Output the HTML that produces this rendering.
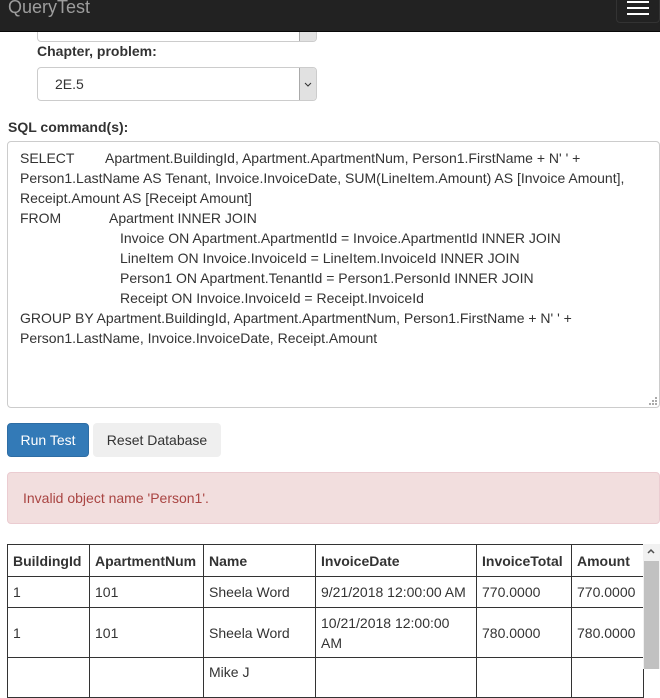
<!DOCTYPE html>
<html><head><style>
*{box-sizing:border-box;margin:0;padding:0}
body{width:660px;height:669px;overflow:hidden;background:#fff;font-family:"Liberation Sans",Arial,sans-serif;font-size:14px;color:#333;position:relative}
.abs{position:absolute}
.nav{left:0;top:0;width:660px;height:32px;background:#222;border-bottom:1px solid #080808;z-index:5}
.brand{left:8px;top:-4px;font-size:18px;color:#9d9d9d;line-height:22px}
.tog{left:616px;top:-10px;width:44px;height:33px;border:1px solid #333;border-radius:4px}
.bar{position:absolute;left:10px;width:22px;height:2px;background:#fff}
.sel{border:1px solid #ccc;border-radius:4px;background:#fff}
.arr{position:absolute;right:0;top:0;bottom:0;width:17px;background:#e1e1e1;border-left:1px solid #aaa;border-radius:0 3px 3px 0}
.lbl{font-weight:bold;font-size:14px}
.ta{left:7px;top:141px;width:653px;height:267px;border:1px solid #ccc;border-radius:4px}
.l{position:absolute;white-space:nowrap;line-height:20px}
table{border-collapse:collapse;position:absolute;left:7px;top:544px}
td,th{border:1px solid #333;padding:0 5px;text-align:left;vertical-align:middle;line-height:20px}
th{height:32px}
</style></head><body>
<div class="abs nav"><div class="abs brand">QueryTest</div>
<div class="abs tog"><div class="bar" style="top:10px"></div><div class="bar" style="top:16px"></div><div class="bar" style="top:22px"></div></div></div>
<div class="abs sel" style="left:37px;top:10px;width:280px;height:32px"><div class="arr"></div></div>
<div class="abs lbl" style="left:37px;top:43px">Chapter, problem:</div>
<div class="abs sel" style="left:37px;top:67px;width:280px;height:34px"><span class="abs" style="left:17px;top:8px">2E.5</span><div class="arr"><svg width="16" height="32" style="position:absolute;left:0;top:0"><path d="M5 15l3 3 3-3" stroke="#333" fill="none"/></svg></div></div>
<div class="abs lbl" style="left:8px;top:119px">SQL command(s):</div>
<div class="abs ta">
<div class="l" style="left:12px;top:6px">SELECT</div><div class="l" style="left:97px;top:6px">Apartment.BuildingId, Apartment.ApartmentNum, Person1.FirstName + N' ' +</div>
<div class="l" style="left:12px;top:26px">Person1.LastName AS Tenant, Invoice.InvoiceDate, SUM(LineItem.Amount) AS [Invoice Amount],</div>
<div class="l" style="left:12px;top:46px">Receipt.Amount AS [Receipt Amount]</div>
<div class="l" style="left:12px;top:66px">FROM</div><div class="l" style="left:101px;top:66px">Apartment INNER JOIN</div>
<div class="l" style="left:112px;top:86px">Invoice ON Apartment.ApartmentId = Invoice.ApartmentId INNER JOIN</div>
<div class="l" style="left:112px;top:106px">LineItem ON Invoice.InvoiceId = LineItem.InvoiceId INNER JOIN</div>
<div class="l" style="left:112px;top:126px">Person1 ON Apartment.TenantId = Person1.PersonId INNER JOIN</div>
<div class="l" style="left:112px;top:146px">Receipt ON Invoice.InvoiceId = Receipt.InvoiceId</div>
<div class="l" style="left:12px;top:166px">GROUP BY Apartment.BuildingId, Apartment.ApartmentNum, Person1.FirstName + N' ' +</div>
<div class="l" style="left:12px;top:186px">Person1.LastName, Invoice.InvoiceDate, Receipt.Amount</div>
<svg class="abs" style="right:2px;bottom:2px" width="8" height="8"><g fill="#aaa"><rect x="6" y="0" width="2" height="2"/><rect x="3" y="3" width="2" height="2"/><rect x="6" y="3" width="2" height="2"/><rect x="0" y="6" width="2" height="2"/><rect x="3" y="6" width="2" height="2"/><rect x="6" y="6" width="2" height="2"/></g></svg>
</div>
<div class="abs" style="left:7px;top:423px;width:82px;height:34px;background:#337ab7;border:1px solid #2e6da4;border-radius:4px;color:#fff;line-height:32px;text-align:center">Run Test</div>
<div class="abs" style="left:93px;top:423px;width:128px;height:34px;background:#efefef;border-radius:4px;line-height:34px;text-align:center">Reset Database</div>
<div class="abs" style="left:7px;top:472px;width:653px;height:52px;background:#f2dede;border:1px solid #ebccd1;border-radius:4px;color:#a94442;padding:15px 15px;line-height:20px">Invalid object name 'Person1'.</div>
<table>
<tr><th style="width:82px">BuildingId</th><th style="width:114px">ApartmentNum</th><th style="width:112px">Name</th><th style="width:161px">InvoiceDate</th><th style="width:95px">InvoiceTotal</th><th style="width:72px">Amount</th></tr>
<tr style="height:31px"><td>1</td><td>101</td><td>Sheela Word</td><td>9/21/2018 12:00:00 AM</td><td>770.0000</td><td>770.0000</td></tr>
<tr style="height:50px"><td>1</td><td>101</td><td>Sheela Word</td><td>10/21/2018 12:00:00 AM</td><td>780.0000</td><td>780.0000</td></tr>
<tr style="height:40px"><td></td><td></td><td style="vertical-align:top;padding-top:4px">Mike J</td><td></td><td></td><td></td></tr>
</table>
<div class="abs" style="left:643px;top:544px;width:17px;height:125px;background:#f1f1f1"></div>
<div class="abs" style="left:644px;top:561px;width:15px;height:108px;background:#c1c1c1"></div>
<svg class="abs" style="left:645px;top:547px" width="12" height="10"><path d="M3 6l3-3 3 3" stroke="#505050" stroke-width="1.5" fill="none"/></svg>
</body></html>
